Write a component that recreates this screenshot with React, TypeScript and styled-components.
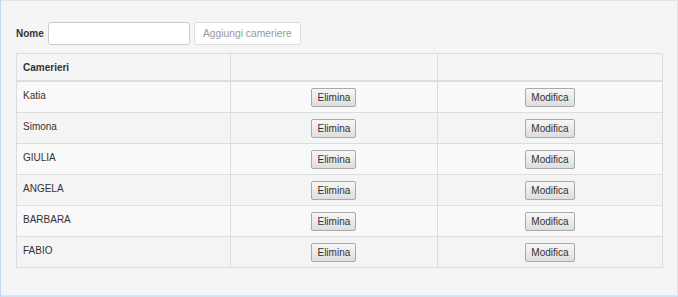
import styled, { createGlobalStyle } from 'styled-components';

const GlobalStyle = createGlobalStyle`
	html, body {
		margin: 0;
		padding: 0;
		background: #f5f5f5;
	}
	body {
		font-family: 'Liberation Sans', Arial, sans-serif;
		font-size: 10px;
		color: #333;
	}
`;

const Frame = styled.div`
	width: 678px;
	height: 297px;
	box-sizing: border-box;
	border-left: 1px solid #bcdaf6;
	border-right: 2px solid #bcdaf6;
	border-bottom: 1px solid #cfe3f6;
	display: flex;
`;

const Well = styled.div`
	flex: 1;
	box-sizing: border-box;
	background: #f5f5f5;
	border: 1px solid #e3e3e3;
	border-left: 0;
	padding: 21px 14px 0 15px;
`;

const Form = styled.form`
	display: flex;
	align-items: center;
	gap: 4px;
	margin-bottom: 8px;
`;

const Label = styled.label`
	font-weight: bold;
	font-size: 10px;
	color: #333;
`;

const Input = styled.input`
	width: 142px;
	height: 23px;
	box-sizing: border-box;
	background: #fff;
	border: 1px solid #ccc;
	border-radius: 3px;
	padding: 0 6px;
	font-family: inherit;
	font-size: 10px;
	outline: none;
`;

const AddButton = styled.button`
	width: 107px;
	height: 23px;
	box-sizing: border-box;
	background: #fff;
	border: 1px solid #ddd;
	border-radius: 3px;
	color: #999;
	font-family: inherit;
	font-size: 10.3px;
	padding: 0;
`;

const Table = styled.table`
	width: 647px;
	border-collapse: collapse;
	border: 1px solid #ddd;
`;

const Th = styled.th<{ $w: number }>`
	width: ${(p) => p.$w}px;
	height: 26px;
	padding: 0 6px;
	text-align: left;
	font-weight: bold;
	font-size: 10px;
	color: #333;
	border: 1px solid #ddd;
	border-bottom: 2px solid #ddd;
	vertical-align: middle;
`;

const Row = styled.tr<{ $odd: boolean }>`
	background: ${(p) => (p.$odd ? '#f9f9f9' : '#f4f4f4')};
`;

const Td = styled.td<{ $center?: boolean }>`
	height: 31px;
	box-sizing: border-box;
	padding: ${(p) => (p.$center ? '6px' : '7px')} 6px 0 6px;
	border: 1px solid #ddd;
	text-align: ${(p) => (p.$center ? 'center' : 'left')};
	vertical-align: top;
	line-height: 14px;
	font-size: 10px;
	color: #333;
`;

const SmallButton = styled.button<{ $w: number }>`
	width: ${(p) => p.$w}px;
	height: 19px;
	box-sizing: border-box;
	padding: 0;
	border: 1px solid #a9a9a9;
	border-radius: 2px;
	background: linear-gradient(#f7f7f7, #dedede);
	color: #333;
	font-family: inherit;
	font-size: 10px;
	vertical-align: top;
`;

const camerieri = ['Katia', 'Simona', 'GIULIA', 'ANGELA', 'BARBARA', 'FABIO'];

export default function App() {
	return (
		<>
			<GlobalStyle />
			<Frame>
				<Well>
					<Form onSubmit={(e) => e.preventDefault()}>
						<Label htmlFor="nome">Nome</Label>
						<Input id="nome" type="text" />
						<AddButton type="submit" disabled>
							Aggiungi cameriere
						</AddButton>
					</Form>
					<Table>
						<thead>
							<tr>
								<Th $w={214}>Camerieri</Th>
								<Th $w={207}></Th>
								<Th $w={226}></Th>
							</tr>
						</thead>
						<tbody>
							{camerieri.map((nome, i) => (
								<Row key={nome} $odd={i % 2 === 0}>
									<Td>{nome}</Td>
									<Td $center>
										<SmallButton $w={45}>Elimina</SmallButton>
									</Td>
									<Td $center>
										<SmallButton $w={50}>Modifica</SmallButton>
									</Td>
								</Row>
							))}
						</tbody>
					</Table>
				</Well>
			</Frame>
		</>
	);
}
